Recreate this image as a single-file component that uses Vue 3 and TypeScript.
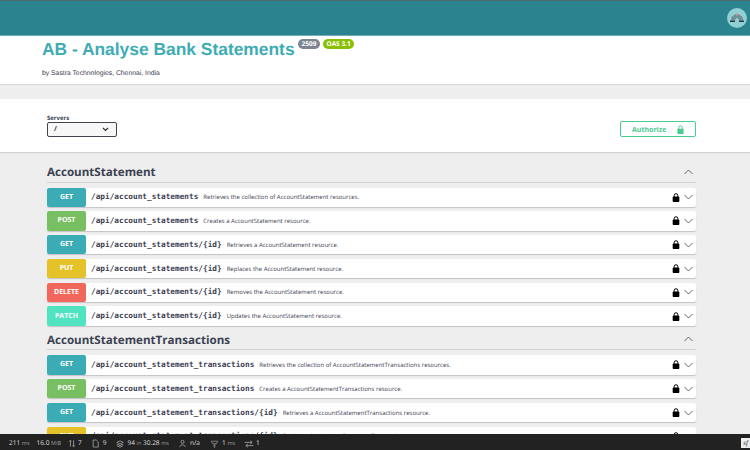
<script setup lang="ts">
interface Op { method: string; path: string; desc: string }
const groups: { name: string; ops: Op[] }[] = [
  { name: 'AccountStatement', ops: [
    { method: 'GET', path: '/api/account_statements', desc: 'Retrieves the collection of AccountStatement resources.' },
    { method: 'POST', path: '/api/account_statements', desc: 'Creates a AccountStatement resource.' },
    { method: 'GET', path: '/api/account_statements/{id}', desc: 'Retrieves a AccountStatement resource.' },
    { method: 'PUT', path: '/api/account_statements/{id}', desc: 'Replaces the AccountStatement resource.' },
    { method: 'DELETE', path: '/api/account_statements/{id}', desc: 'Removes the AccountStatement resource.' },
    { method: 'PATCH', path: '/api/account_statements/{id}', desc: 'Updates the AccountStatement resource.' },
  ] },
  { name: 'AccountStatementTransactions', ops: [
    { method: 'GET', path: '/api/account_statement_transactions', desc: 'Retrieves the collection of AccountStatementTransactions resources.' },
    { method: 'POST', path: '/api/account_statement_transactions', desc: 'Creates a AccountStatementTransactions resource.' },
    { method: 'GET', path: '/api/account_statement_transactions/{id}', desc: 'Retrieves a AccountStatementTransactions resource.' },
    { method: 'PUT', path: '/api/account_statement_transactions/{id}', desc: 'Replaces the AccountStatementTransactions resource.' },
  ] },
]
</script>

<template>
  <div class="page">
    <header class="topbar">
      <div class="avatar">
        <svg width="16" height="12" viewBox="0 0 16 12">
          <path d="M8 1.5 L11 3 L13.5 5 L14 8.5 H10.5 L8 5.5 L5.5 8.5 H2 L2.5 5 L5 3 Z" fill="#6f8f96" />
          <circle cx="8" cy="2.6" r="1.2" fill="#c9929c" />
          <rect x="1" y="8.5" width="5" height="1.5" fill="#24393e" />
          <rect x="10" y="8.5" width="5" height="1.5" fill="#24393e" />
        </svg>
      </div>
    </header>
    <section class="info">
      <div class="title-row">
        <h1 class="title">AB - Analyse Bank Statements</h1>
        <span class="badge version">2509</span>
        <span class="badge oas">OAS 3.1</span>
      </div>
      <p class="by">by Sastra Technologies, Chennai, India</p>
    </section>
    <section class="scheme">
      <div class="servers">
        <span class="servers-label">Servers</span>
        <div class="select">
          <span>/</span>
          <svg width="7" height="5" viewBox="0 0 7 5"><path d="M1 1 L3.5 3.5 L6 1" stroke="#333" stroke-width="1.2" fill="none" /></svg>
        </div>
      </div>
      <button class="authorize">
        <span>Authorize</span>
        <svg width="7" height="9" viewBox="0 0 8 10"><path d="M2 4.5 V2.8 a2 2 0 0 1 4 0 V4.5" stroke="#49cc90" stroke-width="1.1" fill="none" /><rect x="0.5" y="4" width="7" height="6" rx="0.8" fill="#49cc90" /></svg>
      </button>
    </section>
    <main class="body">
      <section v-for="g in groups" :key="g.name" class="group">
        <div class="group-head">
          <h2>{{ g.name }}</h2>
          <svg width="9" height="6" viewBox="0 0 9 6"><path d="M.5 5 L4.5 1 L8.5 5" stroke="#555" stroke-width=".9" fill="none" /></svg>
        </div>
        <div v-for="(o, i) in g.ops" :key="i" class="op">
          <span class="method" :class="o.method.toLowerCase()">{{ o.method }}</span>
          <span class="path">{{ o.path }}</span>
          <span class="desc">{{ o.desc }}</span>
          <svg class="lock" width="8" height="9" viewBox="0 0 8 10"><path d="M2 4.5 V2.8 a2 2 0 0 1 4 0 V4.5" stroke="#000" stroke-width="1.1" fill="none" /><rect x="0.3" y="4" width="7.4" height="6" rx="1" fill="#000" /></svg>
          <svg class="chev" width="9" height="6" viewBox="0 0 9 6"><path d="M.5 1 L4.5 5 L8.5 1" stroke="#555" stroke-width=".9" fill="none" /></svg>
        </div>
      </section>
    </main>
    <footer class="toolbar">
      <span class="t1">211 <i>ms</i></span>
      <span class="t2">16.0 <i>MiB</i></span>
      <span class="ic t3">
        <svg width="8" height="9" viewBox="0 0 10 10"><path d="M3 9 V1 M1.5 2.5 L3 1 L4.5 2.5 M7 1 V9 M5.5 7.5 L7 9 L8.5 7.5" stroke="#aaa" fill="none" /></svg>
        <span>7</span>
      </span>
      <span class="ic t4">
        <svg width="7" height="9" viewBox="0 0 9 10"><path d="M1.5 .5 H5.5 L8 3 V9.5 H1.5 Z" stroke="#aaa" fill="none" /></svg>
        <span>9</span>
      </span>
      <span class="ic t5">
        <svg width="8" height="8" viewBox="0 0 10 10"><path d="M5 1 L9 3 L5 5 L1 3 Z M1 5 L5 7 L9 5 M1 7 L5 9 L9 7" stroke="#aaa" fill="none" /></svg>
        <span>94 <i>in</i> 30.28 <i>ms</i></span>
      </span>
      <span class="ic t6">
        <svg width="7" height="9" viewBox="0 0 9 10"><circle cx="4.5" cy="3" r="2" stroke="#aaa" fill="none" /><path d="M1 9.5 C1 6 8 6 8 9.5" stroke="#aaa" fill="none" /></svg>
        <span>n/a</span>
      </span>
      <span class="ic t7">
        <svg width="9" height="8" viewBox="0 0 10 10"><path d="M1 1.5 H9 L7.5 4.5 H5.5 V9 H4.5 V4.5 H2.5 Z" stroke="#aaa" stroke-width=".8" fill="none" /></svg>
        <span>1 <i>ms</i></span>
      </span>
      <span class="ic t8">
        <svg width="10" height="8" viewBox="0 0 11 10"><path d="M0 3 H9 M7 1 L9.5 3 L7 5 M11 7 H2 M4 5 L1.5 7 L4 9" stroke="#aaa" fill="none" /></svg>
        <span>1</span>
      </span>
      <span class="sf"><em>sf</em></span>
    </footer>
  </div>
</template>

<style>
html, body { margin: 0; background: #eee; }
</style>

<style scoped>
.page { position: relative; width: 750px; height: 450px; overflow: hidden; background: #eee; font-family: "Open Sans", sans-serif; color: #3b4151; text-rendering: geometricPrecision; }
.topbar { box-sizing: border-box; height: 36px; background: #2a838f; border-top: 1px solid #4d6a70; border-bottom: 1px solid #6fb0b8; display: flex; justify-content: flex-end; align-items: center; padding-right: 3px; }
.avatar { width: 20px; height: 20px; border-radius: 50%; background: #8fd0d4; display: flex; align-items: center; justify-content: center; }
.info { box-sizing: border-box; height: 49px; background: #fff; border-bottom: 1px solid #d8d8d8; padding: 0 42px; }
.title-row { display: flex; align-items: flex-start; }
.title { margin: 0; font: bold 17.4px/26px "Liberation Sans", sans-serif; color: #3eacb5; }
.badge { font: bold 6.5px/10px "Open Sans", sans-serif; color: #fff; border-radius: 6px; height: 10px; margin-top: 3px; }
.version { background: #7d8492; margin-left: 3px; padding: 0 4px; }
.oas { background: #89bf04; margin-left: 3px; padding: 0 3px; }
.by { margin: 7px 0 0; font: 6.8px/10px "Liberation Sans", sans-serif; color: #3b4151; }
.scheme { box-sizing: border-box; margin-top: 14px; height: 53px; background: #fff; display: flex; justify-content: space-between; align-items: flex-start; padding: 16px 54px 0 47px; box-shadow: 0 1px 1px rgba(0,0,0,.12); }
.servers { display: flex; flex-direction: column; }
.servers-label { font: bold 6px/7px "Open Sans", sans-serif; }
.select { box-sizing: border-box; width: 70px; height: 15px; border: 1px solid #41444e; border-radius: 2px; background: #f7f7f7; display: flex; align-items: center; justify-content: space-between; padding: 0 7px 0 6px; font: bold 7px/1 "Open Sans", sans-serif; }
.authorize { box-sizing: border-box; width: 76px; height: 16px; margin-top: 6px; background: #fff; border: 1px solid #49cc90; border-radius: 2px; color: #49cc90; font: bold 7px/1 "Open Sans", sans-serif; display: flex; align-items: center; justify-content: space-between; padding: 0 11px; }
.body { padding: 0 54px 0 47px; }
.group { margin-bottom: .7px; }
.group:first-child { padding-top: 10.5px; }
.group-head { box-sizing: border-box; height: 20px; border-bottom: 1px solid #d3d3d5; display: flex; align-items: center; justify-content: space-between; padding: 2px 3.5px 0 0; margin-bottom: 5px; }
.group-head h2 { margin: 0; font: bold 11.6px/1 "Open Sans", sans-serif; color: #3b4151; }
.group-head svg { margin-bottom: 3px; }
.op { height: 19.3px; margin-bottom: 4.5px; background: #fff; border-radius: 2px; box-shadow: 0 1px 1px rgba(0,0,0,.19); display: flex; align-items: center; }
.method { width: 39px; height: 100%; flex: none; display: flex; align-items: center; justify-content: center; border-radius: 2px; color: #fff; font: bold 7px/1 "Open Sans", sans-serif; margin-right: 5px; }
.get { background: #3babb6; }
.post { background: #78bf61; }
.put { background: #e6c229; }
.delete { background: #f1675b; }
.patch { background: #50e3c2; }
.path { font: bold 7.75px/1 "DejaVu Sans Mono", monospace; color: #3b4151; margin-right: 5px; white-space: nowrap; }
.desc { font: 6px/1 "Open Sans", sans-serif; color: #3b4151; white-space: nowrap; flex: 1; }
.lock { margin-right: 3.5px; flex: none; }
.chev { margin-right: 3.5px; flex: none; }
.toolbar { position: absolute; left: 0; right: 0; bottom: 0; height: 16px; background: #222; color: #ddd; font: 6.5px/1 "Open Sans", sans-serif; display: flex; align-items: center; padding: 3px 0 0 9px; box-sizing: border-box; white-space: nowrap; }
.toolbar i { font-style: normal; color: #9a9a9a; font-size: 5.5px; }
.ic { display: flex; align-items: center; gap: 3px; }
.t2 { margin-left: 7px; }
.t3 { margin-left: 7px; gap: 2px; }
.t4 { margin-left: 10px; gap: 4px; }
.t5 { margin-left: 10px; }
.t6 { margin-left: 10px; gap: 4px; }
.t7 { margin-left: 10px; }
.t8 { margin-left: 9px; gap: 2px; }
.sf { position: absolute; right: 0; top: 4px; width: 9px; height: 10px; background: #eee; color: #222; font: italic 7px/10px "Liberation Serif", serif; text-align: center; }
.sf em { font-style: italic; }
</style>
